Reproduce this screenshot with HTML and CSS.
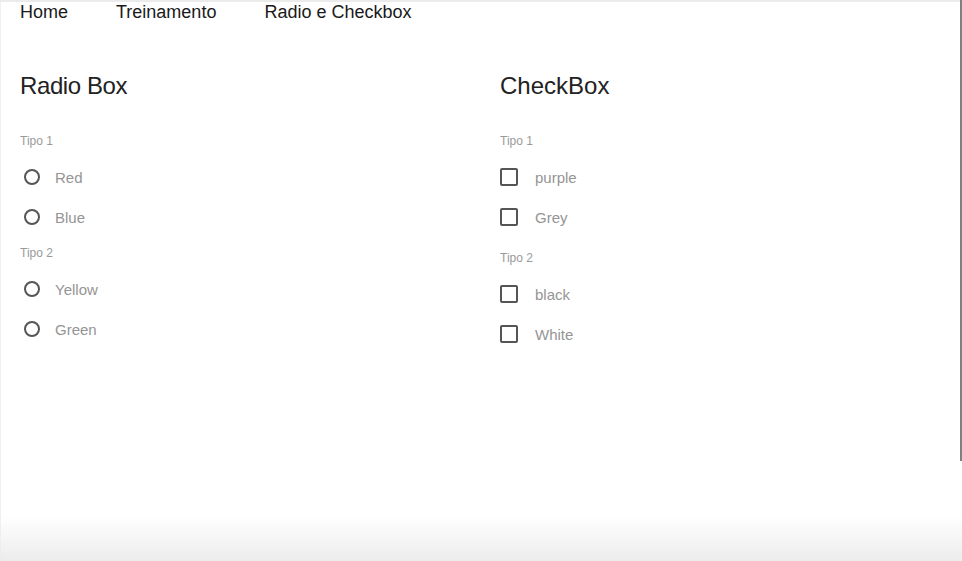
FILE: index.html
```html
<!DOCTYPE html>
<html lang="pt">
<head>
<meta charset="utf-8">
<title>Radio e Checkbox</title>
<link rel="stylesheet" href="styles.css">
</head>
<body>
<div class="app">
  <header class="topbar">
    <nav class="nav">
      <a class="nav-link">Home</a>
      <a class="nav-link">Treinamento</a>
      <a class="nav-link">Radio e Checkbox</a>
    </nav>
  </header>
  <main class="content">
    <section class="col">
      <h2 class="title title-radio">Radio Box</h2>
      <div class="group-label">Tipo 1</div>
      <label class="row"><span class="radio"></span><span class="text">Red</span></label>
      <label class="row"><span class="radio"></span><span class="text">Blue</span></label>
      <div class="group-label group-label-next">Tipo 2</div>
      <label class="row"><span class="radio"></span><span class="text">Yellow</span></label>
      <label class="row"><span class="radio"></span><span class="text">Green</span></label>
    </section>
    <section class="col">
      <h2 class="title">CheckBox</h2>
      <div class="group-label">Tipo 1</div>
      <label class="row row-check"><span class="check"></span><span class="text">purple</span></label>
      <label class="row row-check"><span class="check"></span><span class="text">Grey</span></label>
      <div class="group-label group-label-next-check">Tipo 2</div>
      <label class="row row-check"><span class="check"></span><span class="text">black</span></label>
      <label class="row row-check"><span class="check"></span><span class="text">White</span></label>
    </section>
  </main>
  <div class="scrollbar"></div>
  <div class="bottom-shade"></div>
</div>
</body>
</html>
```
FILE: styles.css
```css
html, body {
  margin: 0;
  padding: 0;
  background: #fff;
}
body {
  font-family: "Liberation Sans", Arial, sans-serif;
  color: #222;
}
.app {
  position: relative;
  width: 962px;
  height: 561px;
  overflow: hidden;
  box-shadow: inset 1px 0 0 #f0f0f0;
}
.topbar {
  border-top: 2px solid #ebebeb;
}
.nav {
  display: flex;
  gap: 48px;
  padding-left: 20px;
  font-size: 18px;
  line-height: 20px;
}
.nav-link {
  color: #1a1a1a;
  text-decoration: none;
}
.content {
  display: grid;
  grid-template-columns: 480px 480px;
  padding-top: 50px;
}
.col {
  display: flex;
  flex-direction: column;
  padding-left: 20px;
}
.title {
  margin: 0 0 33px 0;
  font-size: 24px;
  line-height: 28px;
  font-weight: normal;
  color: #222;
}
.title-radio {
  letter-spacing: -0.4px;
}
.group-label {
  font-size: 12px;
  line-height: 16px;
  color: #9a9a9a;
  margin-bottom: 8px;
}
.group-label-next {
  margin-top: 8px;
}
.group-label-next-check {
  margin-top: 13px;
}
.row {
  display: flex;
  align-items: center;
  height: 40px;
}
.radio {
  box-sizing: border-box;
  width: 16px;
  height: 16px;
  border: 2px solid #555;
  border-radius: 50%;
  margin-left: 4px;
  margin-right: 15px;
  flex: none;
}
.check {
  box-sizing: border-box;
  width: 18px;
  height: 18px;
  border: 2px solid #555;
  border-radius: 2px;
  margin-right: 17px;
  flex: none;
}
.text {
  font-size: 15px;
  color: #959595;
}
.scrollbar {
  position: absolute;
  top: 0;
  right: 0;
  width: 2px;
  height: 461px;
  background: #808080;
}
.bottom-shade {
  position: absolute;
  left: 0;
  right: 0;
  bottom: 0;
  height: 45px;
  background: linear-gradient(to bottom, rgba(236,236,236,0), rgba(236,236,236,1));
  pointer-events: none;
}
```
